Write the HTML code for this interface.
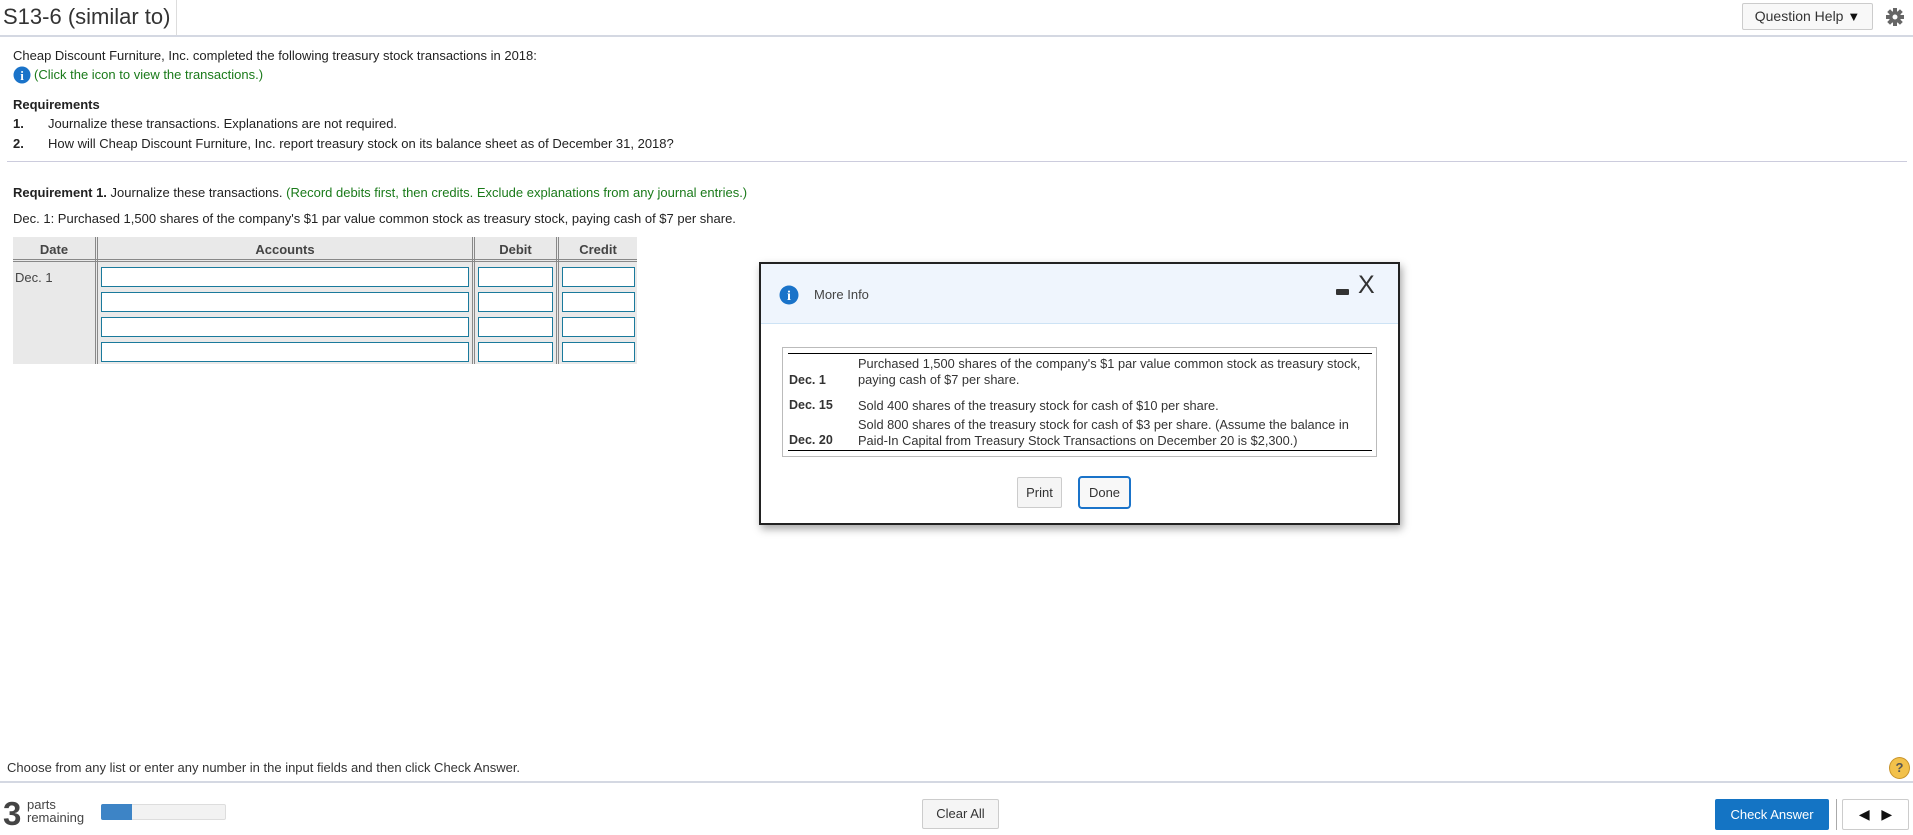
<!DOCTYPE html>
<html><head><meta charset="utf-8"><style>
*{box-sizing:border-box;margin:0;padding:0}
body{width:1913px;height:835px;position:relative;background:#fff;font-family:"Liberation Sans",Arial,sans-serif;font-size:13px;color:#222;overflow:hidden}
.a{position:absolute;white-space:nowrap}
.g{color:#1a7a1a}
.inp{position:absolute;height:20px;border:1px solid #1a7a9c;background:#fff}
.btn{position:absolute;border:1px solid #ccc;background:#f5f5f5;border-radius:2px;text-align:center;color:#333}
</style></head><body>
<div class="a" style="left:0;top:0;width:177px;height:36px;border-right:1px solid #ddd"></div>
<div class="a" style="left:3px;top:4px;font-size:22px;color:#333">S13-6 (similar to)</div>
<div class="a" style="left:0;top:35px;width:1913px;height:2px;background:#d4d8e2"></div>
<div class="btn" style="left:1742px;top:3px;width:131px;height:27px;line-height:25px;font-size:14px;background:#f8f8f8">Question Help <span style="font-size:13px;color:#111">▼</span></div>
<svg class="a" style="left:1885px;top:7px" width="20" height="20" viewBox="0 0 20 20"><g fill="#666"><circle cx="10" cy="10" r="6"/><rect x="8" y="1" width="4" height="18"/><rect x="1" y="8" width="18" height="4"/><rect x="8" y="1" width="4" height="18" transform="rotate(45 10 10)"/><rect x="8" y="1" width="4" height="18" transform="rotate(-45 10 10)"/></g><circle cx="10" cy="10" r="2.5" fill="#fff"/></svg>

<div class="a" style="left:13px;top:48px">Cheap Discount Furniture, Inc. completed the following treasury stock transactions in 2018:</div>
<svg class="a" style="left:13px;top:66px" width="18" height="18"><circle cx="9" cy="9" r="8.5" fill="#1a73c9"/><text x="9" y="14" text-anchor="middle" font-family="Liberation Serif" font-weight="bold" font-size="13" fill="#fff">i</text></svg>
<div class="a g" style="left:34px;top:67px">(Click the icon to view the transactions.)</div>
<div class="a" style="left:13px;top:97px;font-weight:bold">Requirements</div>
<div class="a" style="left:13px;top:116px;font-weight:bold">1.</div>
<div class="a" style="left:48px;top:116px">Journalize these transactions. Explanations are not required.</div>
<div class="a" style="left:13px;top:136px;font-weight:bold">2.</div>
<div class="a" style="left:48px;top:136px">How will Cheap Discount Furniture, Inc. report treasury stock on its balance sheet as of December 31, 2018?</div>
<div class="a" style="left:7px;top:161px;width:1900px;height:1px;background:#ccd"></div>
<div class="a" style="left:13px;top:185px"><b>Requirement 1.</b> Journalize these transactions. <span class="g">(Record debits first, then credits. Exclude explanations from any journal entries.)</span></div>
<div class="a" style="left:13px;top:211px">Dec. 1: Purchased 1,500 shares of the company's $1 par value common stock as treasury stock, paying cash of $7 per share.</div>

<div class="a" style="left:13px;top:237px;width:624px;height:127px;background:#e9e9e9"></div>
<div class="a" style="left:13px;top:259px;width:624px;height:3px;border-top:1px solid #888;border-bottom:1px solid #888"></div>
<div class="a" style="left:95px;top:237px;width:3px;height:127px;border-left:1px solid #888;border-right:1px solid #888"></div>
<div class="a" style="left:472px;top:237px;width:3px;height:127px;border-left:1px solid #888;border-right:1px solid #888"></div>
<div class="a" style="left:556px;top:237px;width:3px;height:127px;border-left:1px solid #888;border-right:1px solid #888"></div>
<div class="a" style="left:13px;top:242px;width:82px;text-align:center;font-weight:bold;color:#444">Date</div>
<div class="a" style="left:98px;top:242px;width:374px;text-align:center;font-weight:bold;color:#444">Accounts</div>
<div class="a" style="left:475px;top:242px;width:81px;text-align:center;font-weight:bold;color:#444">Debit</div>
<div class="a" style="left:559px;top:242px;width:78px;text-align:center;font-weight:bold;color:#444">Credit</div>
<div class="a" style="left:15px;top:270px;color:#444">Dec. 1</div>
<div class="inp" style="left:101px;top:267px;width:368px"></div><div class="inp" style="left:478px;top:267px;width:75px"></div><div class="inp" style="left:562px;top:267px;width:73px"></div>
<div class="inp" style="left:101px;top:292px;width:368px"></div><div class="inp" style="left:478px;top:292px;width:75px"></div><div class="inp" style="left:562px;top:292px;width:73px"></div>
<div class="inp" style="left:101px;top:317px;width:368px"></div><div class="inp" style="left:478px;top:317px;width:75px"></div><div class="inp" style="left:562px;top:317px;width:73px"></div>
<div class="inp" style="left:101px;top:342px;width:368px"></div><div class="inp" style="left:478px;top:342px;width:75px"></div><div class="inp" style="left:562px;top:342px;width:73px"></div>

<div class="a" style="left:759px;top:262px;width:641px;height:263px;border:2px solid #222;background:#fff;box-shadow:2px 4px 8px rgba(0,0,0,.35)">
 <div style="position:absolute;left:0;top:0;width:637px;height:60px;background:#eff5fd;border-bottom:1px solid #cde3f5"></div>
 <svg style="position:absolute;left:18px;top:21px" width="20" height="20"><circle cx="10" cy="10" r="9.5" fill="#1a73c9"/><text x="10" y="15" text-anchor="middle" font-family="Liberation Serif" font-weight="bold" font-size="14" fill="#fff">i</text></svg>
 <div style="position:absolute;left:53px;top:23px;font-size:13px;color:#444">More Info</div>
 <div style="position:absolute;left:575px;top:25px;width:13px;height:6px;background:#333;border-radius:1px"></div>
 <div style="position:absolute;left:597px;top:7px;font-size:25px;color:#333">X</div>
 <div style="position:absolute;left:21px;top:83px;width:595px;height:110px;border:1px solid #bbb"></div>
 <div style="position:absolute;left:27px;top:89px;width:584px;height:1px;background:#000"></div>
 <div style="position:absolute;left:27px;top:186px;width:584px;height:1px;background:#000"></div>
 <div style="position:absolute;left:97px;top:92px;font-size:12.8px;color:#333;line-height:16px">Purchased 1,500 shares of the company's $1 par value common stock as treasury stock,<br>paying cash of $7 per share.</div>
 <div style="position:absolute;left:28px;top:109px;font-weight:bold;font-size:12.5px;color:#333">Dec. 1</div>
 <div style="position:absolute;left:28px;top:134px;font-weight:bold;font-size:12.5px;color:#333">Dec. 15</div>
 <div style="position:absolute;left:97px;top:134px;font-size:12.8px;color:#333">Sold 400 shares of the treasury stock for cash of $10 per share.</div>
 <div style="position:absolute;left:97px;top:153px;font-size:12.8px;color:#333;line-height:16px">Sold 800 shares of the treasury stock for cash of $3 per share. (Assume the balance in<br>Paid-In Capital from Treasury Stock Transactions on December 20 is $2,300.)</div>
 <div style="position:absolute;left:28px;top:169px;font-weight:bold;font-size:12.5px;color:#333">Dec. 20</div>
 <div class="btn" style="left:256px;top:213px;width:45px;height:31px;line-height:29px">Print</div>
 <div class="btn" style="left:317px;top:212px;width:53px;height:33px;line-height:29px;border:2px solid #1a73c9;background:#f8f8f8;border-radius:4px">Done</div>
</div>

<div class="a" style="left:7px;top:760px;color:#333">Choose from any list or enter any number in the input fields and then click Check Answer.</div>
<div class="a" style="left:1889px;top:757px;width:21px;height:22px;border-radius:50%;background:#f2c14b;border:1px solid #c9942a;text-align:center;line-height:20px;font-weight:bold;color:#555">?</div>
<div class="a" style="left:0;top:781px;width:1913px;height:2px;background:#d4d8e2"></div>
<div class="a" style="left:3px;top:795px;font-size:33px;font-weight:bold;color:#444">3</div>
<div class="a" style="left:27px;top:798px;font-size:13px;line-height:13px;color:#444">parts<br>remaining</div>
<div class="a" style="left:101px;top:804px;width:125px;height:16px;background:#f2f2f2;border:1px solid #ddd;border-radius:2px"></div>
<div class="a" style="left:101px;top:804px;width:31px;height:16px;background:#3d84c6;border-radius:2px 0 0 2px"></div>
<div class="btn" style="left:922px;top:799px;width:77px;height:30px;line-height:28px">Clear All</div>
<div class="a" style="left:1715px;top:799px;width:114px;height:31px;background:#1474c4;color:#fff;text-align:center;line-height:31px;border-radius:2px">Check Answer</div>
<div class="a" style="left:1836px;top:799px;width:1px;height:31px;background:#aaa"></div>
<div class="btn" style="left:1842px;top:799px;width:67px;height:31px;background:#fff;line-height:29px;font-size:14px;color:#111">◀&nbsp;&nbsp;&nbsp;▶</div>
</body></html>
